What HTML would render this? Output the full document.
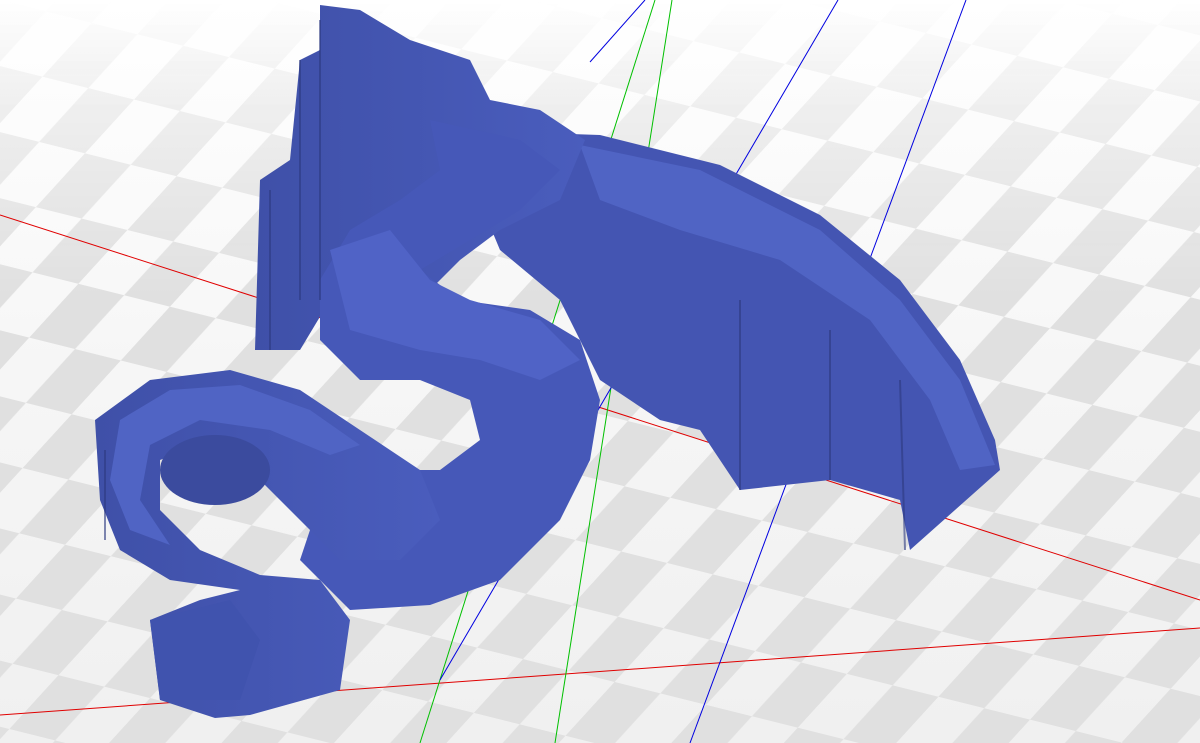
<!DOCTYPE html>
<html><head><meta charset="utf-8"><style>
html,body{margin:0;padding:0;width:1200px;height:743px;overflow:hidden;background:#fff}
</style></head><body>
<svg width="1200" height="743" viewBox="0 0 1200 743" xmlns="http://www.w3.org/2000/svg">
<defs>
<linearGradient id="bg" x1="0" y1="0" x2="0" y2="1">
<stop offset="0" stop-color="#ffffff"/><stop offset="0.5" stop-color="#f6f6f6"/><stop offset="1" stop-color="#f0f0f0"/>
</linearGradient>
<pattern id="chk" width="110" height="110" patternUnits="userSpaceOnUse" patternTransform="skewX(-35) rotate(12)">
<rect width="55" height="55" fill="#e0e0e0"/><rect x="55" y="55" width="55" height="55" fill="#e0e0e0"/>
</pattern>
<linearGradient id="fade" x1="0" y1="0" x2="0" y2="1">
<stop offset="0" stop-color="#fff" stop-opacity="0"/><stop offset="0.15" stop-color="#fff" stop-opacity="0.5"/><stop offset="0.4" stop-color="#fff" stop-opacity="1"/><stop offset="1" stop-color="#fff" stop-opacity="1"/>
</linearGradient>
<mask id="m"><rect width="1200" height="743" fill="url(#fade)"/></mask>
<linearGradient id="body" x1="0" y1="0" x2="1" y2="0">
<stop offset="0" stop-color="#3f50a8"/><stop offset="1" stop-color="#4a5dbd"/>
</linearGradient>
</defs>
<rect width="1200" height="743" fill="url(#bg)"/>
<rect width="1200" height="743" fill="url(#chk)" mask="url(#m)"/>
<g stroke-width="1" fill="none">
<line x1="0" y1="215" x2="1200" y2="600" stroke="#e00000"/>
<line x1="0" y1="715" x2="1200" y2="628" stroke="#e00000"/>
<line x1="655" y1="0" x2="420" y2="743" stroke="#00c000"/>
<line x1="672" y1="0" x2="555" y2="743" stroke="#00c000"/>
<line x1="645" y1="0" x2="590" y2="62" stroke="#0000e0"/>
<line x1="838" y1="0" x2="440" y2="680" stroke="#0000e0"/>
<line x1="966" y1="0" x2="690" y2="743" stroke="#0000e0"/>
</g>
<path d="M450 130 L600 135 L720 165 L820 215 L900 280 L960 360 L995 440 L1000 470 L910 550 L900 500 L830 480 L740 490 L700 430 L660 420 L600 380 L560 300 L500 250 Z" fill="#4455b2"/>
<path d="M580 145 L700 170 L820 230 L900 300 L960 380 L995 465 L960 470 L930 400 L870 320 L780 260 L680 230 L600 200 Z" fill="#5064c4"/>
<path d="M320 5 L360 10 L410 40 L470 60 L490 100 L540 110 L585 140 L560 200 L500 230 L460 260 L420 300 L330 300 L300 350 L255 350 L260 180 L290 160 L300 60 L320 50 Z" fill="url(#body)"/>
<path d="M430 120 L520 140 L560 170 L520 210 L470 240 L420 270 L460 300 L530 310 L580 340 L600 400 L590 460 L560 520 L500 580 L430 605 L350 610 L300 560 L320 500 L380 470 L440 470 L480 440 L470 400 L420 380 L360 380 L320 340 L320 280 L350 230 L400 200 L440 170 Z" fill="#4658b8"/>
<path d="M330 250 L390 230 L430 280 L470 300 L540 320 L580 360 L540 380 L480 360 L420 350 L350 330 Z" fill="#5063c6"/>
<path d="M95 420 L150 380 L230 370 L300 390 L360 430 L420 470 L440 520 L400 560 L340 560 L300 520 L250 470 L200 445 L160 460 L160 510 L200 550 L260 575 L320 580 L350 620 L340 690 L250 715 L215 718 L160 700 L150 620 L200 600 L240 590 L170 580 L120 550 L100 500 Z" fill="url(#body)"/>
<path d="M120 420 L170 390 L240 385 L310 410 L360 445 L330 455 L270 430 L200 420 L150 445 L140 500 L170 545 L130 530 L110 480 Z" fill="#5064c4"/>
<ellipse cx="215" cy="470" rx="55" ry="35" fill="#3b4b9e"/>
<path d="M150 620 L230 600 L260 640 L240 700 L160 700 Z" fill="#4053ae"/>
<g stroke="#2d3a80" stroke-width="2" opacity="0.6">
<line x1="300" y1="60" x2="300" y2="300"/><line x1="320" y1="20" x2="320" y2="300"/>
<line x1="270" y1="190" x2="270" y2="350"/><line x1="105" y1="450" x2="105" y2="540"/>
<line x1="740" y1="300" x2="740" y2="490"/><line x1="830" y1="330" x2="830" y2="480"/>
<line x1="900" y1="380" x2="905" y2="550"/>
</g>
</svg>
</body></html>
